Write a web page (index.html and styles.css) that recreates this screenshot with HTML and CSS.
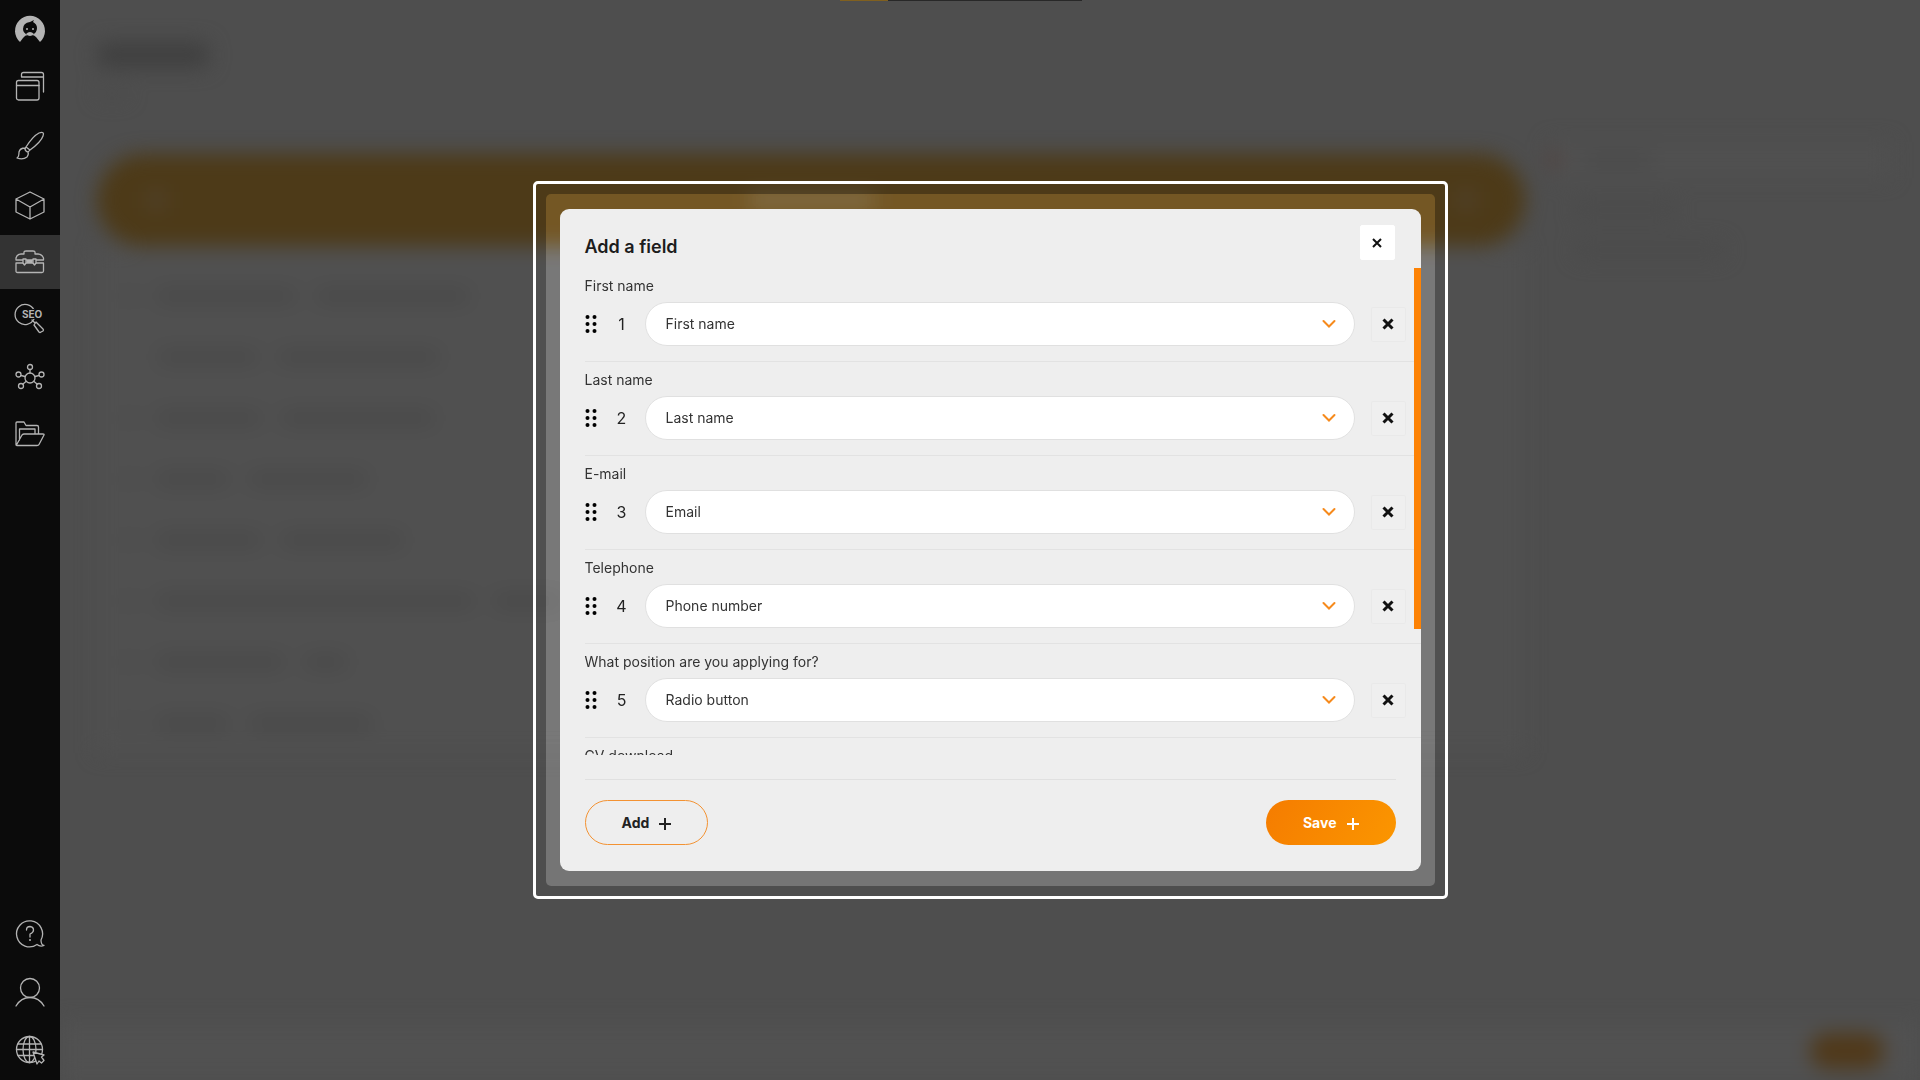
FILE: index.html
```html
<!DOCTYPE html>
<html lang="en">
<head>
    <meta charset="UTF-8">
    <meta name="viewport" content="width=device-width, initial-scale=1.0">
    <title>Add a field</title>
    <link rel="stylesheet" href="styles.css">
</head>
<body>
    <nav class="sidebar">
        <a class="logo" href="#" aria-label="Home">
            <svg width="30" height="28" viewBox="0 0 30 28">
                <path class="fill" d="M5 27A15 15 0 1 1 25 27L21 22Q19 20 17 20Q22 18 22 13Q22 9 18 7L19 5L15 7Q8 8 8 14Q8 18 13 20Q10 20 8 23Z"/>
                <circle class="fill" cx="12" cy="14" r="1"/>
                <circle class="fill" cx="18" cy="14" r="1"/>
                <path class="fill" d="M11 19Q15 15 19 19Q15 23 11 19Z"/>
            </svg>
        </a>
        <a class="nav-item" href="#" aria-label="Pages">
            <svg width="30" height="30" viewBox="0 0 30 30">
                <rect x="1.500" y="7.500" width="22.500" height="19.500" rx="2"/>
                <path d="M1.500 12.500H24M6.500 4V1.500Q6.500-.5 8.500-.5H26.500Q28.500-.5 28.500 1.500V19M6.500 4H28.500"/>
            </svg>
        </a>
        <a class="nav-item" href="#" aria-label="Design">
            <svg width="30" height="30" viewBox="0 0 30 30">
                <path d="M11 16Q18 5 24 2Q30 0 28 5Q26 11 15 19ZM11 16Q9 18 11 20Q13 22 15 19M10 17Q5 17 4 21Q4 26 2 27Q8 29 12 26Q14 23 13 21"/>
            </svg>
        </a>
        <a class="nav-item" href="#" aria-label="Products">
            <svg width="30" height="30" viewBox="0 0 30 30">
                <path d="M15 3L29 10V23L15 30L1 23V10ZM1 10L15 18L29 10M15 18V30"/>
            </svg>
        </a>
        <a class="nav-item active" href="#" aria-label="Tools">
            <svg width="30" height="30" viewBox="0 0 30 30">
                <path d="M1 13V11Q2 7 6 7H9V5Q9 4 11 4H18Q20 4 20 5V7H23Q27 7 28.500 11V13ZM1 16H28.500V24Q28.500 25.500 27 25.500H2.500Q1 25.500 1 24ZM12 14.500H17"/>
                <path class="cut" d="M8 12H11V16L9.500 18L8 16ZM18 12H21V16L19.500 18L18 16Z"/>
            </svg>
        </a>
        <a class="nav-item" href="#" aria-label="SEO">
            <svg width="30" height="30" viewBox="0 0 30 30">
                <path d="M19 5A10 10 0 1 0 19 14M17 15L20 18M19 20L21 17L28 24Q29 25 28 26L26 27Q25 28 24 27Z"/>
                <text x="7" y="13">SEO</text>
            </svg>
        </a>
        <a class="nav-item" href="#" aria-label="Network">
            <svg width="30" height="30" viewBox="0 0 30 30">
                <circle cx="15" cy="15" r="5"/>
                <circle cx="15" cy="4" r="2.500"/>
                <circle cx="3.500" cy="11.500" r="2.500"/>
                <circle cx="26.500" cy="11.500" r="2.500"/>
                <circle cx="6" cy="23" r="2.500"/>
                <circle cx="24" cy="23" r="2.500"/>
                <path d="M15 6.500V10M6 12.500L10 13.500M24 12.500L20 13.500M8 21L11 18.500M22 21L19 18.500"/>
            </svg>
        </a>
        <a class="nav-item" href="#" aria-label="Files">
            <svg width="30" height="30" viewBox="0 0 30 30">
                <path d="M1 24V2Q1 1 2 1H9L11 4.500H22Q23.500 4.500 23.500 6V13M4.500 19V8H20V13M2 24.500Q1 24.500 2 23L7 14Q8 13 9 13H28Q29.500 13 29 14L24 23.500Q23.500 24.500 22 24.500Z"/>
            </svg>
        </a>
        <div class="nav-bottom">
            <a class="nav-item" href="#" aria-label="Help">
                <svg width="30" height="30" viewBox="0 0 30 30">
                    <path d="M26 21Q26 26 29 26.500Q25 28 22 25.500A13 13 0 1 1 26 21ZM11.500 11Q11.500 7.500 15 7.500Q18.500 8 18.500 11Q18.500 13.500 15 15V18"/>
                    <circle class="fill" cx="15" cy="21" r="1"/>
                </svg>
            </a>
            <a class="nav-item" href="#" aria-label="Account">
                <svg width="30" height="30" viewBox="0 0 30 30">
                    <circle cx="15" cy="11" r="9.500"/>
                    <path d="M1 29Q6 20.500 15 20.500T29 29"/>
                </svg>
            </a>
            <a class="nav-item" href="#" aria-label="Language">
                <svg width="30" height="30" viewBox="0 0 30 30">
                    <circle cx="14.500" cy="14.500" r="13"/>
                    <ellipse cx="14.500" cy="14.500" rx="6.500" ry="13"/>
                    <path d="M14.500 1.500V27.500M3 9H26M1.500 14.500H27.500M3 20.500H26"/>
                    <path class="cut" d="M18 17L29 20L26.500 22L29 25.500L26.500 28L24 26L22 29Z"/>
                </svg>
            </a>
        </div>
    </nav>

    <main class="main">
        <div class="page" aria-hidden="true">
            <div class="page-head">
                <div class="bar heading"></div>
                <div class="bar subheading"></div>
            </div>
            <div class="columns">
                <div class="form-preview">
                    <div class="banner">
                        <i class="banner-dot"></i>
                        <i class="banner-title"></i>
                        <i class="banner-dot"></i>
                    </div>
                    <div class="preview-list">
                        <div class="line"><i class="bar num"></i><i class="bar" style="width:142px"></i><i class="bar" style="width:155px"></i></div>
                        <div class="line"><i class="bar" style="width:102px"></i><i class="bar" style="width:163px"></i></div>
                        <div class="line"><i class="bar num"></i><i class="bar" style="width:107px"></i><i class="bar" style="width:155px"></i></div>
                        <div class="line"><i class="bar num"></i><i class="bar" style="width:75px"></i><i class="bar" style="width:120px"></i></div>
                        <div class="line"><i class="bar num"></i><i class="bar" style="width:107px"></i><i class="bar" style="width:124px"></i></div>
                        <div class="line"><i class="bar num"></i><i class="bar" style="width:320px"></i><i class="bar" style="width:70px"></i></div>
                        <div class="line"><i class="bar num"></i><i class="bar" style="width:130px"></i><i class="bar" style="width:45px"></i></div>
                        <div class="line"><i class="bar num"></i><i class="bar" style="width:75px"></i><i class="bar" style="width:125px"></i></div>
                    </div>
                </div>
                <div class="options">
                    <div class="option-head"><i class="red-dot"></i><i class="bar" style="width:70px"></i></div>
                    <i class="bar" style="width:100px"></i>
                    <i class="bar" style="width:150px"></i>
                </div>
            </div>
            <div class="page-foot"><i class="foot-button"></i></div>
        </div>

        <div class="progress"></div>

        <div class="overlay">
            <div class="frame">
                <div class="frame-inner">
                    <section class="modal" role="dialog" aria-labelledby="modal-title">
                        <header class="modal-head">
                            <h1 id="modal-title">Add a field</h1>
                            <button class="close" type="button" aria-label="Close">
                                <svg width="10" height="10" viewBox="0 0 10 10"><path d="M1 1L9 9M9 1L1 9"/></svg>
                            </button>
                        </header>

                        <div class="fields-wrap">
                            <div class="fields">
                                <div class="field">
                                    <label for="field1">First name</label>
                                    <div class="field-row">
                                        <svg class="grip" width="12" height="20" viewBox="0 0 12 20"><circle cx="2.500" cy="3" r="2"/><circle cx="9.500" cy="3" r="2"/><circle cx="2.500" cy="10" r="2"/><circle cx="9.500" cy="10" r="2"/><circle cx="2.500" cy="17" r="2"/><circle cx="9.500" cy="17" r="2"/></svg>
                                        <span class="number">1</span>
                                        <div class="select-wrap">
                                            <select id="field1"><option>First name</option></select>
                                            <svg class="chevron" width="14" height="8" viewBox="0 0 14 8"><path d="M1.500 1L7 6.500L12.500 1"/></svg>
                                        </div>
                                        <button class="remove" type="button" aria-label="Remove field 1"><svg width="12" height="12" viewBox="0 0 12 12"><path d="M1.500 1.500L10.500 10.500M10.500 1.500L1.500 10.500"/></svg></button>
                                    </div>
                                </div>
                                <div class="field">
                                    <label for="field2">Last name</label>
                                    <div class="field-row">
                                        <svg class="grip" width="12" height="20" viewBox="0 0 12 20"><circle cx="2.500" cy="3" r="2"/><circle cx="9.500" cy="3" r="2"/><circle cx="2.500" cy="10" r="2"/><circle cx="9.500" cy="10" r="2"/><circle cx="2.500" cy="17" r="2"/><circle cx="9.500" cy="17" r="2"/></svg>
                                        <span class="number">2</span>
                                        <div class="select-wrap">
                                            <select id="field2"><option>Last name</option></select>
                                            <svg class="chevron" width="14" height="8" viewBox="0 0 14 8"><path d="M1.500 1L7 6.500L12.500 1"/></svg>
                                        </div>
                                        <button class="remove" type="button" aria-label="Remove field 2"><svg width="12" height="12" viewBox="0 0 12 12"><path d="M1.500 1.500L10.500 10.500M10.500 1.500L1.500 10.500"/></svg></button>
                                    </div>
                                </div>
                                <div class="field">
                                    <label for="field3">E-mail</label>
                                    <div class="field-row">
                                        <svg class="grip" width="12" height="20" viewBox="0 0 12 20"><circle cx="2.500" cy="3" r="2"/><circle cx="9.500" cy="3" r="2"/><circle cx="2.500" cy="10" r="2"/><circle cx="9.500" cy="10" r="2"/><circle cx="2.500" cy="17" r="2"/><circle cx="9.500" cy="17" r="2"/></svg>
                                        <span class="number">3</span>
                                        <div class="select-wrap">
                                            <select id="field3"><option>Email</option></select>
                                            <svg class="chevron" width="14" height="8" viewBox="0 0 14 8"><path d="M1.500 1L7 6.500L12.500 1"/></svg>
                                        </div>
                                        <button class="remove" type="button" aria-label="Remove field 3"><svg width="12" height="12" viewBox="0 0 12 12"><path d="M1.500 1.500L10.500 10.500M10.500 1.500L1.500 10.500"/></svg></button>
                                    </div>
                                </div>
                                <div class="field">
                                    <label for="field4">Telephone</label>
                                    <div class="field-row">
                                        <svg class="grip" width="12" height="20" viewBox="0 0 12 20"><circle cx="2.500" cy="3" r="2"/><circle cx="9.500" cy="3" r="2"/><circle cx="2.500" cy="10" r="2"/><circle cx="9.500" cy="10" r="2"/><circle cx="2.500" cy="17" r="2"/><circle cx="9.500" cy="17" r="2"/></svg>
                                        <span class="number">4</span>
                                        <div class="select-wrap">
                                            <select id="field4"><option>Phone number</option></select>
                                            <svg class="chevron" width="14" height="8" viewBox="0 0 14 8"><path d="M1.500 1L7 6.500L12.500 1"/></svg>
                                        </div>
                                        <button class="remove" type="button" aria-label="Remove field 4"><svg width="12" height="12" viewBox="0 0 12 12"><path d="M1.500 1.500L10.500 10.500M10.500 1.500L1.500 10.500"/></svg></button>
                                    </div>
                                </div>
                                <div class="field">
                                    <label for="field5">What position are you applying for?</label>
                                    <div class="field-row">
                                        <svg class="grip" width="12" height="20" viewBox="0 0 12 20"><circle cx="2.500" cy="3" r="2"/><circle cx="9.500" cy="3" r="2"/><circle cx="2.500" cy="10" r="2"/><circle cx="9.500" cy="10" r="2"/><circle cx="2.500" cy="17" r="2"/><circle cx="9.500" cy="17" r="2"/></svg>
                                        <span class="number">5</span>
                                        <div class="select-wrap">
                                            <select id="field5"><option>Radio button</option></select>
                                            <svg class="chevron" width="14" height="8" viewBox="0 0 14 8"><path d="M1.500 1L7 6.500L12.500 1"/></svg>
                                        </div>
                                        <button class="remove" type="button" aria-label="Remove field 5"><svg width="12" height="12" viewBox="0 0 12 12"><path d="M1.500 1.500L10.500 10.500M10.500 1.500L1.500 10.500"/></svg></button>
                                    </div>
                                </div>
                                <div class="field">
                                    <label>CV download</label>
                                    <div class="field-row"></div>
                                </div>
                                <div class="field"></div>
                            </div>
                            <div class="scroll-thumb"></div>
                        </div>

                        <footer class="modal-foot">
                            <button class="btn btn-outline" type="button">Add <svg width="12" height="12" viewBox="0 0 12 12"><path d="M6 1V13M0 7H12"/></svg></button>
                            <button class="btn btn-primary" type="button">Save <svg width="12" height="12" viewBox="0 0 12 12"><path d="M6 1V13M0 7H12"/></svg></button>
                        </footer>
                    </section>
                </div>
            </div>
        </div>
    </main>
</body>
</html>
```
FILE: styles.css
```css
* {
    margin: 0;
    padding: 0;
    box-sizing: border-box;
}

body {
    display: flex;
    height: 100vh;
    overflow: hidden;
    background: #4e4e4e;
    color: #222;
    font-family: Inter, "Liberation Sans", sans-serif;
    font-size: 14px;
    line-height: 20px;
}

button, select {
    font: inherit;
    color: inherit;
}

svg {
    display: block;
    flex: none;
    overflow: visible;
    fill: none;
    stroke: currentColor;
}

/* sidebar */
.sidebar {
    display: flex;
    flex-direction: column;
    gap: 4px;
    width: 60px;
    flex: none;
    padding-bottom: 3px;
    background: #0b0b0b;
    color: #b4b4b4;
}

.sidebar svg {
    stroke-width: 1.3;
    stroke-linejoin: round;
    stroke-linecap: round;
}

.sidebar .fill {
    fill: currentColor;
    stroke: none;
}

.sidebar .cut {
    fill: #0b0b0b;
}

.sidebar text {
    fill: currentColor;
    stroke: #0b0b0b;
    stroke-width: 2;
    paint-order: stroke;
    font-size: 10px;
    font-weight: 700;
}

.logo, .nav-item {
    display: flex;
    align-items: center;
    justify-content: center;
    height: 54px;
    color: inherit;
}

.logo {
    height: 57px;
}

.nav-item.active {
    background: #333;
}

.nav-item.active .cut {
    fill: #333;
}

.nav-bottom {
    display: flex;
    flex-direction: column;
    gap: 4px;
    margin-top: auto;
}

/* blurred page behind the dialog */
.main {
    position: relative;
    flex: 1;
    min-width: 0;
    overflow: hidden;
}

.page {
    display: flex;
    flex-direction: column;
    height: 100%;
    filter: blur(10px);
}

.page-head {
    height: 154px;
    padding: 42px 37px 0;
}

.bar {
    display: block;
    height: 16px;
    border-radius: 8px;
    background: #494949;
}

.heading {
    width: 112px;
    height: 26px;
    background: #404040;
}

.subheading {
    width: 30px;
    height: 10px;
    margin-top: 20px;
    background: #4b4b4b;
}

.columns {
    display: flex;
    gap: 24px;
    flex: 1;
    padding: 0 30px 0 37px;
}

.form-preview {
    flex: 1;
}

.banner {
    display: flex;
    align-items: center;
    justify-content: space-between;
    height: 92px;
    padding: 0 50px;
    border-radius: 46px;
    background: #4d3a18;
}

.banner-dot {
    width: 18px;
    height: 18px;
    background: #50422c;
}

.banner-title {
    width: 125px;
    height: 16px;
    background: #574930;
}

.preview-list {
    padding: 19px 20px 0;
    background: #505050;
}

.line {
    display: flex;
    align-items: center;
    gap: 18px;
    height: 61px;
    padding-left: 40px;
}

.line .num {
    width: 16px;
    margin-left: -36px;
    background: #4c4c4c;
}

.options {
    display: flex;
    flex-direction: column;
    gap: 24px;
    width: 341px;
}

.option-head {
    display: flex;
    align-items: center;
    gap: 24px;
    height: 36px;
    margin-top: -12px;
    background: #505050;
}

.options .bar {
    margin-left: 26px;
    background: #4b4b4b;
}

.options .option-head .bar {
    margin-left: 0;
}

.red-dot {
    width: 10px;
    height: 10px;
    background: #553832;
}

.page-foot {
    display: flex;
    align-items: center;
    justify-content: flex-end;
    height: 58px;
    padding: 0 36px;
    background: #515151;
}

.foot-button {
    width: 74px;
    height: 36px;
    border-radius: 18px;
    background: #50391a;
}

.progress {
    position: absolute;
    top: 0;
    left: 780px;
    width: 242px;
    height: 1px;
    background: linear-gradient(to right, #80601f 20%, #282828 20%);
}

/* dialog */
.overlay {
    position: absolute;
    inset: 0;
    display: flex;
    align-items: center;
    justify-content: center;
}

.frame {
    width: 100%;
    max-width: 915px;
    padding: 10px;
    border: 3px solid #fff;
    border-radius: 5px;
}

.frame-inner {
    padding: 15px 14px;
    border-radius: 5px;
    backdrop-filter: brightness(1.5);
}

.modal {
    border-radius: 9px;
    background: #eee;
}

.modal-head {
    display: flex;
    align-items: flex-start;
    justify-content: space-between;
    height: 59px;
    padding: 16px 26px 0 25px;
}

.modal-head h1 {
    padding-top: 11px;
    font-size: 18px;
    font-weight: 600;
    line-height: 22px;
    color: #1c1c1c;
}

.close, .remove {
    display: flex;
    align-items: center;
    justify-content: center;
    width: 35px;
    height: 35px;
    border: 1px solid #e9e9e9;
    border-radius: 2px;
    background: #efefef;
    color: #111;
    stroke-width: 2;
    cursor: pointer;
}

.close {
    border-color: #fff;
    background: #fff;
}

.remove {
    stroke-width: 3;
}

.fields-wrap {
    position: relative;
}

.fields {
    max-height: 487px;
    padding-left: 25px;
    overflow-y: auto;
    scrollbar-width: none;
}

.scroll-thumb {
    position: absolute;
    top: 0;
    right: 0;
    width: 7px;
    height: 361px;
    background: #fd8204;
}

.field {
    height: 94px;
    padding-top: 8px;
    border-bottom: 1px solid #e2e2e2;
}

.field label {
    display: block;
    margin-bottom: 6px;
    color: #333;
}

.field-row {
    display: flex;
    align-items: center;
    height: 44px;
    padding-right: 15px;
}

.grip {
    fill: #000;
    stroke: none;
}

.number {
    width: 48px;
    padding-left: 2px;
    text-align: center;
    font-size: 16px;
}

.select-wrap {
    position: relative;
    flex: 1;
    margin-right: 16px;
}

.select-wrap select {
    display: block;
    width: 100%;
    height: 44px;
    padding: 0 50px 0 20px;
    border: 1px solid #e0e0e0;
    border-radius: 22px;
    background: #fff;
    color: #333;
    appearance: none;
}

.chevron {
    position: absolute;
    top: 18px;
    right: 19px;
    stroke: #f68a1c;
    stroke-width: 2;
    stroke-linecap: round;
    pointer-events: none;
}

.modal-foot {
    display: flex;
    align-items: center;
    justify-content: space-between;
    margin: 24px 25px 0;
    padding: 20px 0 26px;
    border-top: 1px solid #e0e0e0;
}

.btn {
    display: flex;
    align-items: center;
    gap: 10px;
    height: 45px;
    padding: 0 36px;
    border: 1px solid #f39232;
    border-radius: 23px;
    background: transparent;
    font-weight: 700;
    stroke-width: 2;
    cursor: pointer;
}

.btn-primary {
    border-color: transparent;
    background: linear-gradient(120deg, #f57c00, #fb9600) border-box;
    color: #fff;
}
```
